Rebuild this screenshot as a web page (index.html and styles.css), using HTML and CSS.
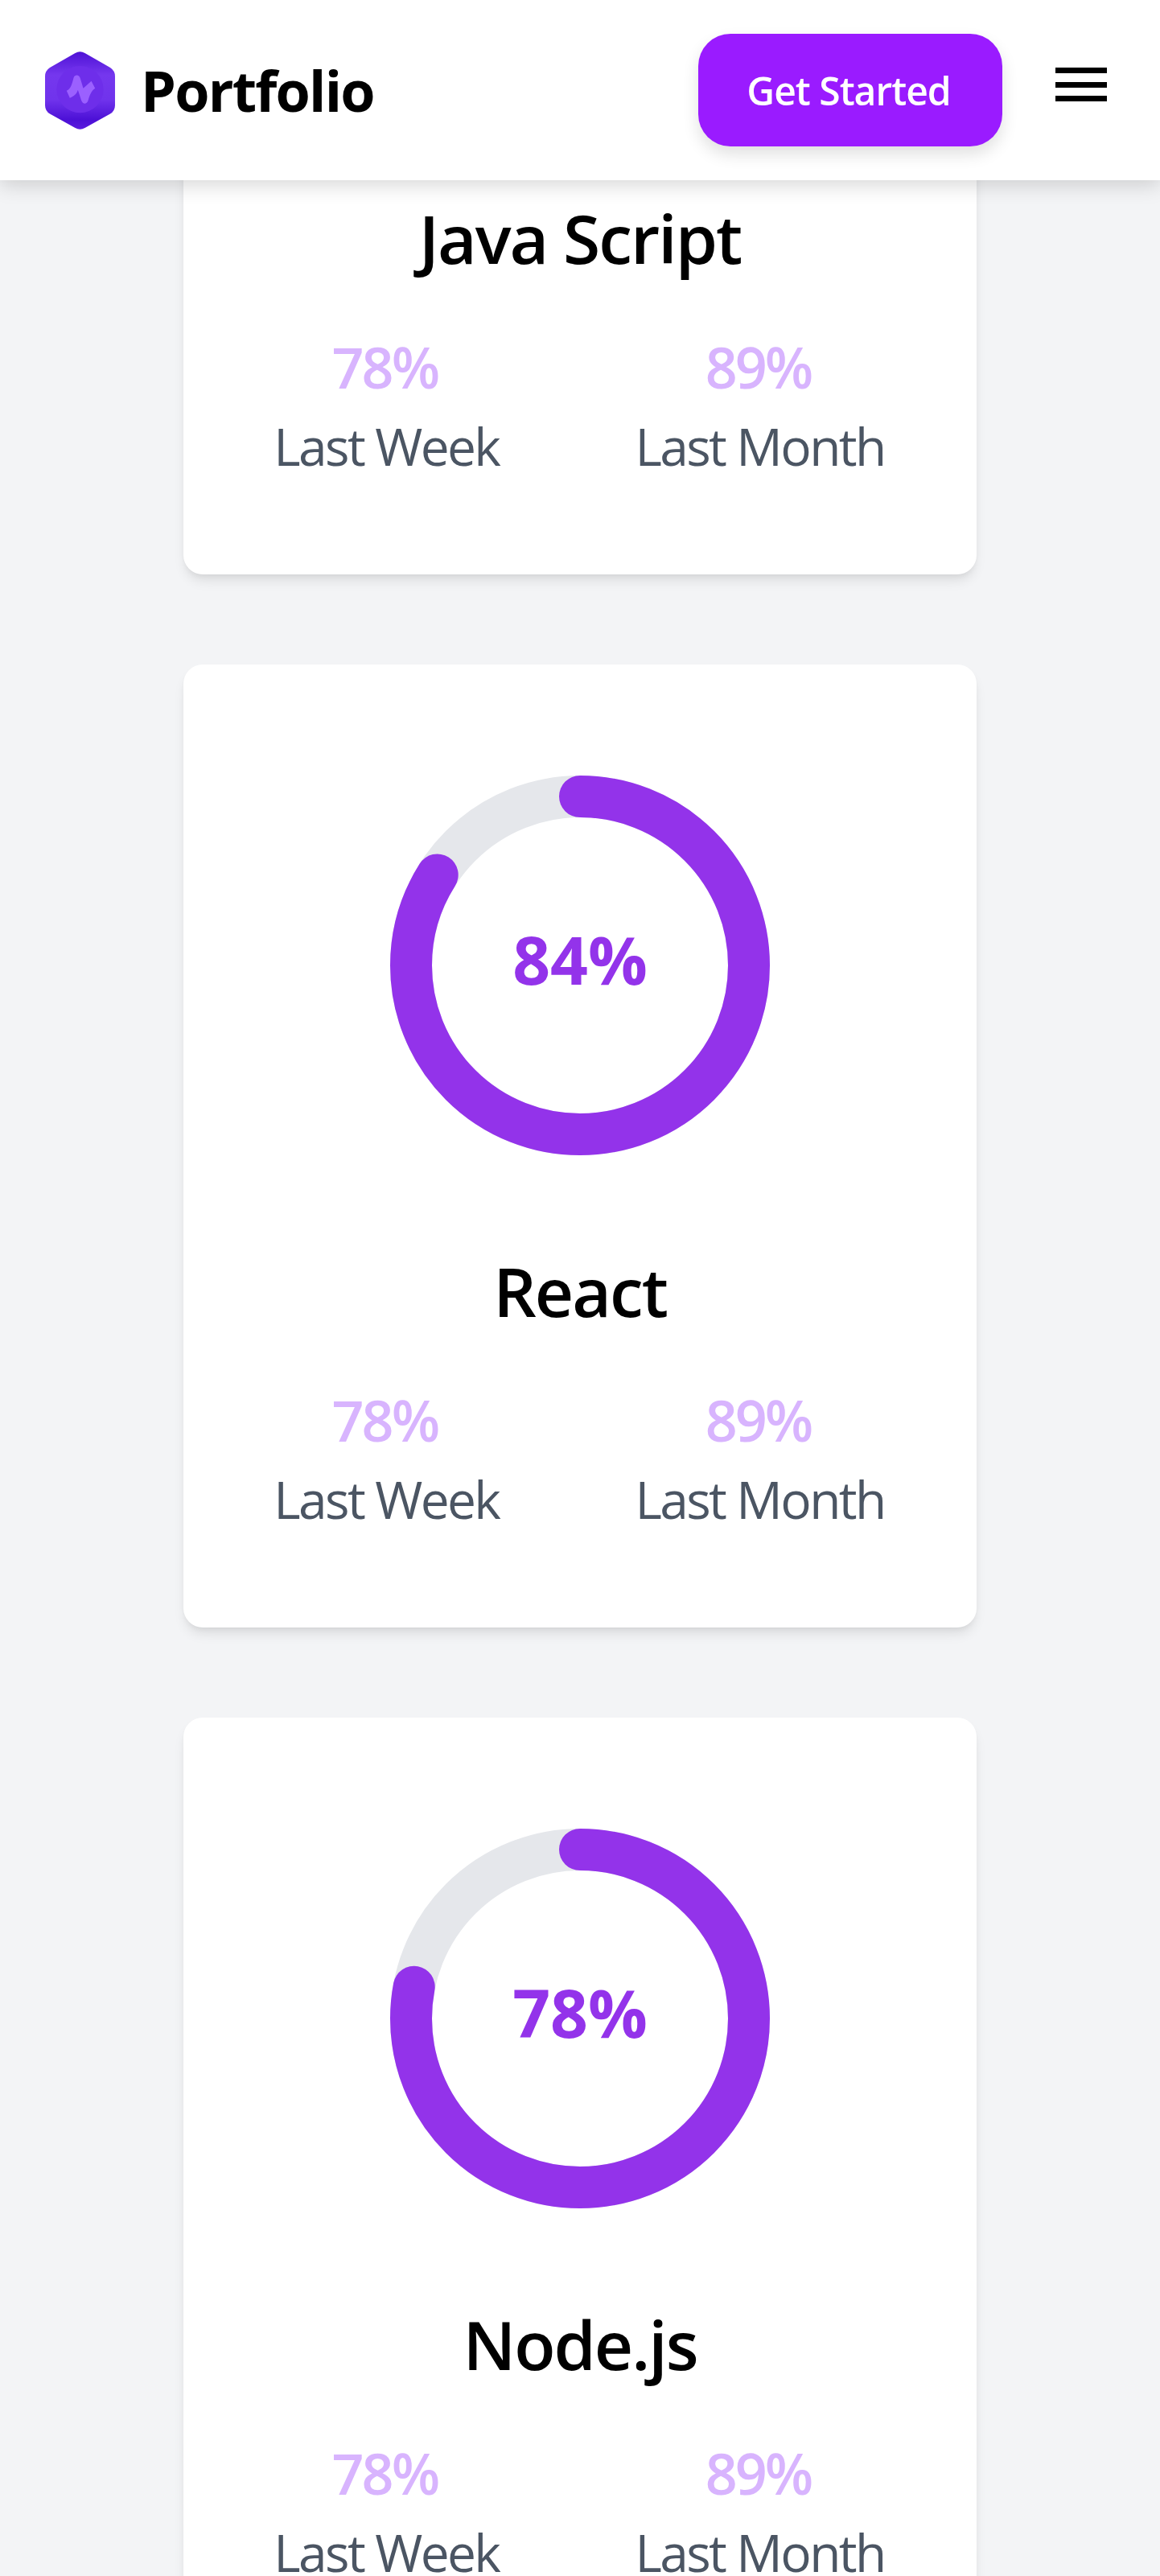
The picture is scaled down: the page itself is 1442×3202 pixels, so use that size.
FILE: index.html

```html
<!DOCTYPE html>
<html lang="en" dir="ltr">
<head>
  <meta charset="UTF-8">
  <title>Portfolio</title>
  <link rel="stylesheet" href="styles.css">
</head>

<body>
  <header class="site-header">
    <svg class="logo" viewBox="78 67 260 296" aria-hidden="true">
      <defs>
        <linearGradient id="hexFill" x1="0" y1="0" x2="0" y2="1">
          <stop offset="0" stop-color="#4f12d6"/>
          <stop offset="0.3" stop-color="#7537ee"/>
          <stop offset="0.62" stop-color="#7033ec"/>
          <stop offset="0.88" stop-color="#4c10d6"/>
          <stop offset="1" stop-color="#5a1ade"/>
        </linearGradient>
      </defs>
      <path fill="url(#hexFill)" d="M190 76 Q208 66 226 76 L320 130 Q338 142 338 162 L338 270 Q338 290 320 302 L226 354 Q208 364 190 354 L96 302 Q78 290 78 270 L78 162 Q78 142 96 130 Z"/>
      <circle cx="208" cy="211" r="87" fill="#6e2eea"/>
      <path fill="#9b60ff" d="M158 216 C175 208 178 190 184 168 C188 155 205 155 209 170 L220 207 L250 180 L264 207 C250 215 243 235 238 252 C232 268 218 266 213 252 L200 213 C195 230 185 236 170 243 Z"/>
    </svg>
    <span class="brand">Portfolio</span>
    <button class="cta">Get Started</button>
    <div class="burger"><span></span><span></span><span></span></div>
  </header>

  <main class="skills">
    <section class="card">
      <div class="ring">
        <svg viewBox="0 0 472 472" aria-hidden="true">
          <circle class="track" cx="236" cy="236" r="210"/>
        </svg>
      </div>
      <h2>Java Script</h2>
      <div class="stats">
        <div class="stat"><strong>78%</strong><span>Last Week</span></div>
        <div class="stat"><strong>89%</strong><span>Last Month</span></div>
      </div>
    </section>

    <section class="card">
      <div class="ring">
        <svg viewBox="0 0 472 472" aria-hidden="true">
          <circle class="track" cx="236" cy="236" r="210"/>
          <circle class="progress" cx="236" cy="236" r="210" pathLength="100" stroke-dasharray="84 100"/>
        </svg>
        <span class="ring-value">84%</span>
      </div>
      <h2>React</h2>
      <div class="stats">
        <div class="stat"><strong>78%</strong><span>Last Week</span></div>
        <div class="stat"><strong>89%</strong><span>Last Month</span></div>
      </div>
    </section>

    <section class="card">
      <div class="ring">
        <svg viewBox="0 0 472 472" aria-hidden="true">
          <circle class="track" cx="236" cy="236" r="210"/>
          <circle class="progress" cx="236" cy="236" r="210" pathLength="100" stroke-dasharray="78 100"/>
        </svg>
        <span class="ring-value">78%</span>
      </div>
      <h2>Node.js</h2>
      <div class="stats">
        <div class="stat"><strong>78%</strong><span>Last Week</span></div>
        <div class="stat"><strong>89%</strong><span>Last Month</span></div>
      </div>
    </section>
  </main>
</body>
</html>
```

FILE: styles.css

```css
html, body {
  height: 3202px;
  overflow: hidden;
}
body {
  background-color: #f3f4f6;
  color: #000;
  font-family: 'Open Sans', 'Noto Sans', sans-serif;
  margin: 0;
  padding: 0;
}

.site-header {
  position: fixed;
  top: 0;
  left: 0;
  right: 0;
  z-index: 10;
  height: 224px;
  display: flex;
  align-items: center;
  padding: 0 66px 0 56px;
  background-color: #fff;
  box-shadow: 0 6px 24px rgba(0,0,0,0.16);
}
.logo {
  width: 87px;
  height: 99px;
  margin-top: 1px;
}
.brand {
  margin-left: 32px;
  font-size: 70px;
  font-weight: 700;
  letter-spacing: -1.8px;
}
.cta {
  margin-left: auto;
  margin-right: 2px;
  width: 378px;
  height: 140px;
  padding: 0 4px 0 0;
  border: none;
  border-radius: 40px;
  background-color: #9a1bff;
  color: #fff;
  font-family: inherit;
  font-size: 48px;
  font-weight: 600;
  letter-spacing: -1px;
  box-shadow: 0 10px 20px rgba(0,0,0,0.12);
}
.burger {
  margin-left: 64px;
  margin-top: -14px;
  width: 64px;
  display: flex;
  flex-direction: column;
  gap: 10.5px;
}
.burger span {
  display: block;
  height: 7px;
  background-color: #000;
}

.skills {
  margin-top: -483px;
  display: flex;
  flex-direction: column;
  align-items: center;
  gap: 112px;
}
.card {
  box-sizing: border-box;
  width: 986px;
  height: 1197px;
  padding-top: 138px;
  background-color: #fff;
  border-radius: 24px;
  box-shadow: 0 10px 15px -3px rgba(0,0,0,0.1), 0 4px 6px -2px rgba(0,0,0,0.05);
}
.card h2 {
  margin: 119px 0 0;
  text-align: center;
  font-size: 84px;
  line-height: 100px;
  font-weight: 600;
  letter-spacing: -2px;
}

.ring {
  position: relative;
  width: 472px;
  height: 472px;
  margin: 0 auto;
}
.ring svg {
  display: block;
  width: 472px;
  height: 472px;
  transform: rotate(-90deg);
}
.ring circle {
  fill: none;
  stroke-width: 52;
}
.track {
  stroke: #e5e7eb;
}
.progress {
  stroke: #9333ea;
  stroke-linecap: round;
}
.ring-value {
  position: absolute;
  top: 0;
  left: 0;
  right: 0;
  bottom: 16px;
  display: flex;
  align-items: center;
  justify-content: center;
  font-size: 82px;
  font-weight: 700;
  letter-spacing: 0;
  color: #9333ea;
}

.stats {
  display: flex;
  justify-content: center;
  gap: 169px;
  margin-top: 65px;
  padding-right: 2px;
}
.stat {
  text-align: center;
}
.stat strong {
  display: block;
  margin-bottom: 2px;
  padding-right: 4px;
  color: #d8b4fe;
  font-size: 70px;
  line-height: 90px;
  font-weight: 600;
  letter-spacing: -3px;
}
.stat span {
  display: block;
  color: #4b5563;
  font-size: 64px;
  line-height: 104px;
  letter-spacing: -2.6px;
}
```
